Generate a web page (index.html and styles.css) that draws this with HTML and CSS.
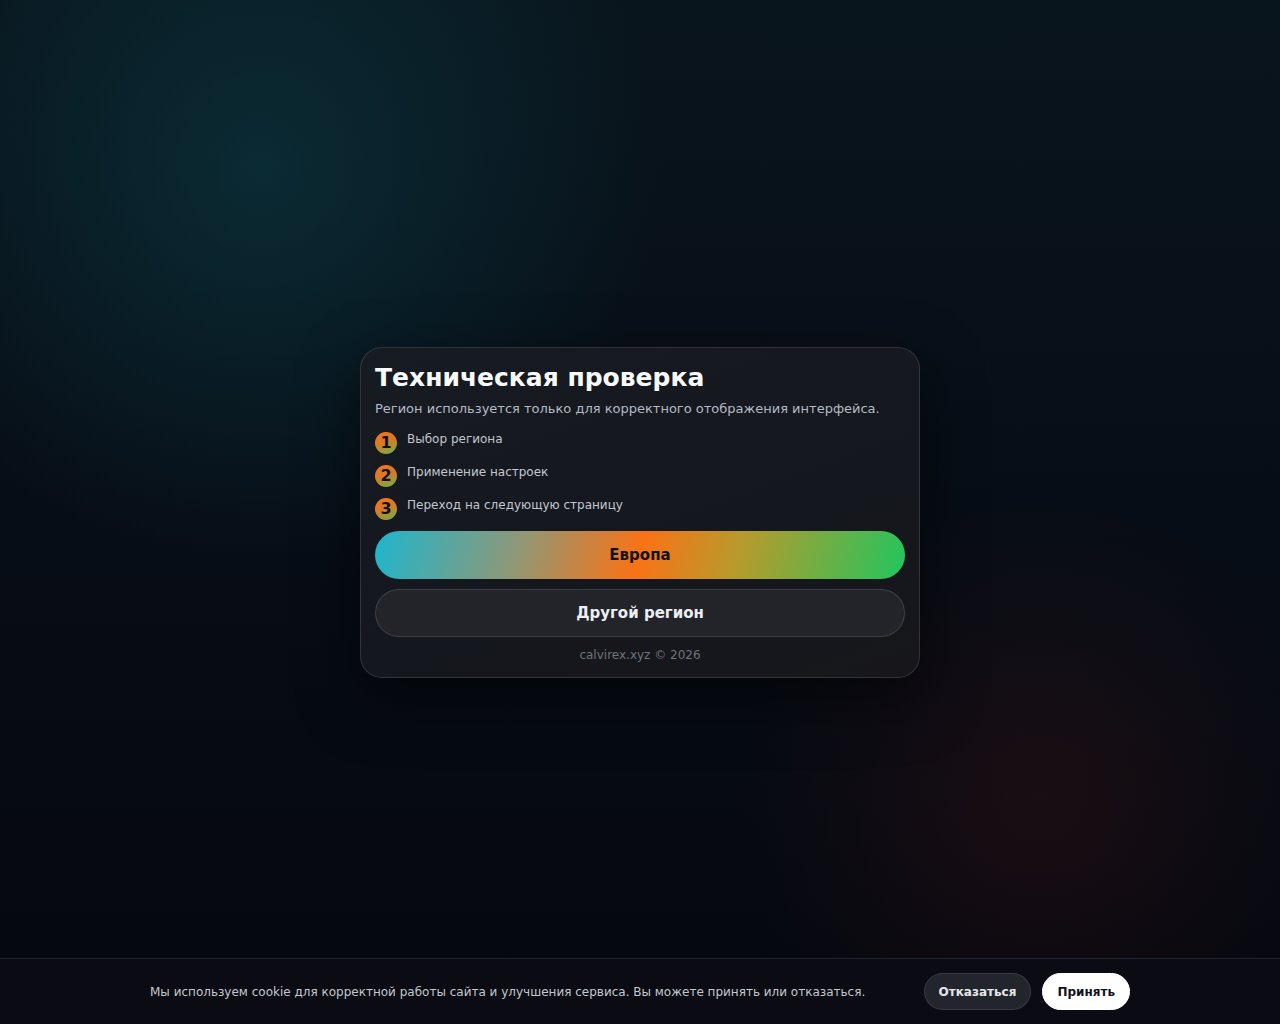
FILE: index.html
```html
<!DOCTYPE html>
<html lang="ru">

<head>
	<meta charset="UTF-8">
	<title>Техническая проверка</title>
	<link rel="stylesheet" href="styles.css">
</head>

<body>
	<main class="page">
		<section class="card">
			<h1 class="card-title">Техническая проверка</h1>
			<p class="card-lead">Регион используется только для корректного отображения интерфейса.</p>

			<ol class="steps">
				<li class="step"><span class="step-num">1</span><span class="step-text">Выбор региона</span></li>
				<li class="step"><span class="step-num">2</span><span class="step-text">Применение настроек</span></li>
				<li class="step"><span class="step-num">3</span><span class="step-text">Переход на следующую страницу</span></li>
			</ol>

			<button class="btn btn-main" type="button">Европа</button>
			<button class="btn btn-alt" type="button">Другой регион</button>

			<p class="card-foot">calvirex.xyz © 2026</p>
		</section>
	</main>

	<!-- cookie notice -->
	<div class="cookie">
		<p class="cookie-text">Мы используем cookie для корректной работы сайта и улучшения сервиса. Вы можете принять или отказаться.</p>
		<div class="cookie-actions">
			<button class="cookie-btn cookie-deny" type="button">Отказаться</button>
			<button class="cookie-btn cookie-ok" type="button">Принять</button>
		</div>
	</div>
</body>

</html>
```

FILE: styles.css
```css
* {
	box-sizing: border-box;
}

html,
body {
	margin: 0;
	height: 100%;
}

body {
	font-family: "DejaVu Sans", "Noto Sans", sans-serif;
	color: #e5e7eb;
	background:
		radial-gradient(circle at 260px 170px, rgba(12, 62, 72, 0.55) 0, rgba(12, 62, 72, 0) 400px),
		radial-gradient(circle at 1040px 800px, rgba(70, 24, 20, 0.3) 0, rgba(70, 24, 20, 0) 300px),
		linear-gradient(180deg, #09151d 0%, #070d16 50%, #05070f 100%);
	overflow: hidden;
}

.page {
	height: 100%;
	display: flex;
	align-items: center;
	justify-content: center;
}

.card {
	width: 560px;
	padding: 14px 14px 13px 14px;
	border-radius: 22px;
	border: 1px solid rgba(255, 255, 255, 0.12);
	background: linear-gradient(160deg, #171b22 0%, #14171d 60%, #17171b 100%);
	box-shadow: 0 20px 60px rgba(0, 0, 0, 0.55);
}

.card-title {
	margin: 0;
	font-size: 25px;
	line-height: 32px;
	font-weight: bold;
	color: #f8fafc;
}

.card-lead {
	margin: 6px 0 0;
	font-size: 13px;
	line-height: 18px;
	color: #b4bac4;
}

.steps {
	list-style: none;
	margin: 12px 0 0;
	padding: 0;
}

.step {
	display: flex;
	align-items: flex-start;
	gap: 10px;
	height: 33px;
}

.step-num {
	flex: none;
	width: 22px;
	height: 22px;
	margin-top: 2px;
	border-radius: 50%;
	background: linear-gradient(160deg, #f97316 0%, #d97a28 45%, #6ab34c 100%);
	color: #111318;
	font-size: 16px;
	font-weight: bold;
	line-height: 22px;
	text-align: center;
}

.step-text {
	font-size: 12px;
	line-height: 18px;
	color: #c2c7cf;
}

.btn {
	display: block;
	width: 100%;
	height: 48px;
	border-radius: 24px;
	font-family: inherit;
	font-size: 15px;
	font-weight: bold;
	cursor: pointer;
}

.btn-main {
	margin-top: 2px;
	border: 0;
	color: #111214;
	background: linear-gradient(105deg, #1eb6cd 0%, #8e9878 27%, #f97316 50%, #b89a2c 68%, #22c55e 100%);
}

.btn-alt {
	margin-top: 10px;
	border: 1px solid rgba(255, 255, 255, 0.13);
	color: #eceef2;
	background: #23242a;
}

.card-foot {
	margin: 9px 0 0;
	text-align: center;
	font-size: 12px;
	line-height: 18px;
	color: #6f737c;
}

.cookie {
	position: fixed;
	left: 0;
	right: 0;
	bottom: 0;
	height: 66px;
	display: flex;
	align-items: center;
	justify-content: space-between;
	padding: 0 150px;
	background: #0b0c13;
	border-top: 1px solid #1f2330;
}

.cookie-text {
	margin: 0;
	font-size: 12px;
	white-space: nowrap;
	color: #c3c7ce;
}

.cookie-actions {
	display: flex;
	gap: 11px;
}

.cookie-btn {
	height: 37px;
	padding: 0 14px;
	border-radius: 19px;
	font-family: inherit;
	font-size: 12px;
	font-weight: bold;
	cursor: pointer;
}

.cookie-deny {
	border: 1px solid rgba(255, 255, 255, 0.1);
	background: #22252c;
	color: #e5e7eb;
}

.cookie-ok {
	border: 1px solid #fff;
	background: #fff;
	color: #111318;
}
```
